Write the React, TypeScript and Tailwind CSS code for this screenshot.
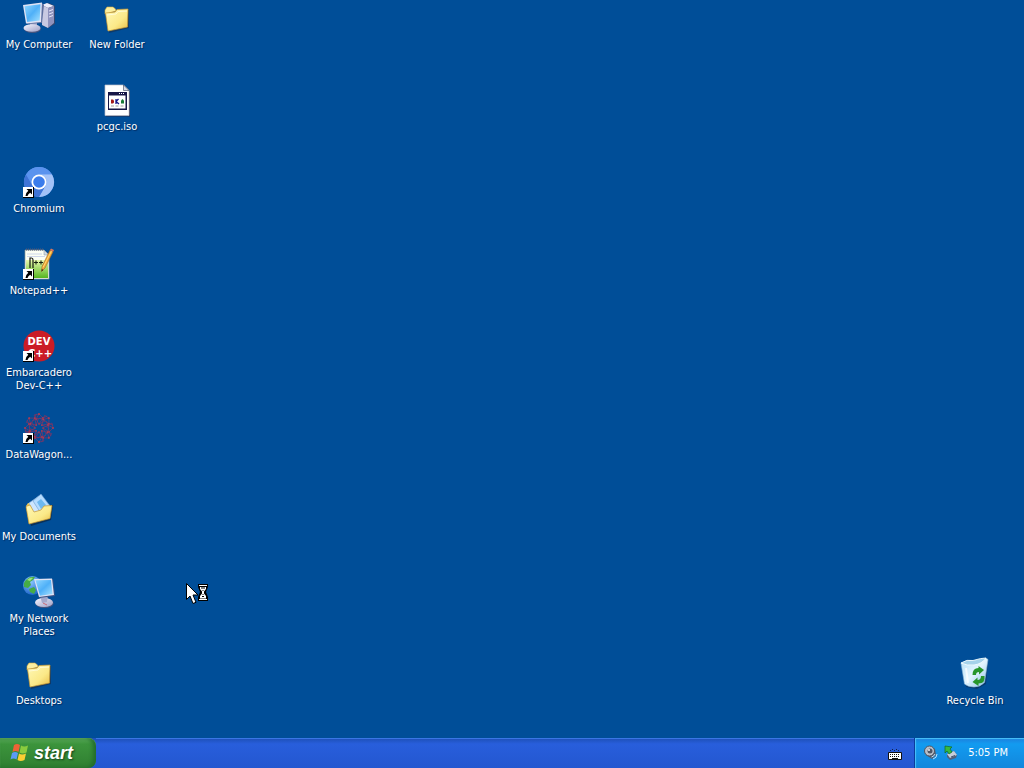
import { ReactNode, useState } from 'react'

type DesktopItem = { name: string; icon: ReactNode; place: string; shortcut?: boolean }

const Svg = ({ children }: { children: ReactNode }) => (
  <svg viewBox="0 0 32 32" className="size-8 overflow-visible" aria-hidden="true">
    {children}
  </svg>
)

const Gradients = () => (
  <svg className="absolute size-0" aria-hidden="true">
    <defs>
      <linearGradient id="screen" x1="0" y1="0" x2="1" y2="1">
        <stop offset="0" stopColor="#8fd6ff" />
        <stop offset="0.5" stopColor="#4fb0f8" />
        <stop offset="1" stopColor="#a6e2ff" />
      </linearGradient>
      <linearGradient id="folder" x1="0" y1="0" x2="1" y2="1">
        <stop offset="0" stopColor="#fff9b8" />
        <stop offset="0.6" stopColor="#fbe988" />
        <stop offset="1" stopColor="#e9bd45" />
      </linearGradient>
      <linearGradient id="plastic" x1="0" y1="0" x2="1" y2="1">
        <stop offset="0" stopColor="#f6f6ff" />
        <stop offset="1" stopColor="#9d9fc6" />
      </linearGradient>
      <linearGradient id="glass" x1="0" y1="0" x2="1" y2="1">
        <stop offset="0" stopColor="#b4def5" />
        <stop offset="0.5" stopColor="#e3f5ff" />
        <stop offset="1" stopColor="#86bde2" />
      </linearGradient>
      <linearGradient id="grass" x1="0" y1="0" x2="0" y2="1">
        <stop offset="0" stopColor="#e9f9ae" />
        <stop offset="1" stopColor="#55b51f" />
      </linearGradient>
      <radialGradient id="globe" cx="0.4" cy="0.3" r="0.7">
        <stop offset="0" stopColor="#8cc8ff" />
        <stop offset="1" stopColor="#1f66cc" />
      </radialGradient>
    </defs>
  </svg>
)

const ShortcutArrow = () => (
  <svg viewBox="0 0 11 11" className="absolute bottom-0 left-0 size-[11px]" aria-hidden="true">
    <path d="M0 0h11v11H0z" fill="#000" />
    <path d="M0 0h10v10H0z" fill="#fff" />
    <path d="M3.500 2H9v5.500L7.200 5.700Q5 7 4.500 9H2.500Q2.500 6 5.300 3.800z" fill="#000" />
  </svg>
)

const ComputerIcon = () => (
  <Svg>
    <path d="M20 3l6-2 6 3v18l-7 4-6-3z" fill="#34466e" />
    <path d="M19 3l5-2 7 3-6 2z" fill="#eeeefb" />
    <path d="M19 3l6 3v20l-6-3z" fill="#c8c9e2" />
    <path d="M25 6l6-2v17l-6 5z" fill="#8f92bd" />
    <path d="M26 9l4-1.500M26 12l4-1.500M26 15l4-1.500" stroke="#e6e6f8" />
    <path d="M7 20h7v5H7z" fill="#a4a9cc" />
    <ellipse cx="9.500" cy="27" rx="8.500" ry="4" fill="#49557e" />
    <ellipse cx="9" cy="26" rx="8.500" ry="3.800" fill="url(#plastic)" />
    <path d="M0.500 3.500L19 1l2 2-2 18L4 22z" fill="#5d6f9f" />
    <path d="M0 3L19 0.500 18 20 3 21.500z" fill="#dfe3f5" />
    <path d="M1.500 4.200L17.500 2.200 16.700 18.500 4.200 20z" fill="url(#screen)" />
  </Svg>
)

const FolderIcon = () => (
  <Svg>
    <path d="M5 9l23-1 0 18-20 5z" fill="#143054" opacity="0.7" />
    <path d="M4 8l2-3h6l2.500 2L15 9l-11 3z" fill="#fbefa0" stroke="#d9ab3b" strokeWidth="0.6" />
    <path d="M4.500 11L14 10l2-2.500 11-0.500-0.500 18L7 29z" fill="url(#folder)" stroke="#c79632" strokeWidth="0.700" />
    <path d="M6 13l9-1 2-2.500 9-0.500" fill="none" stroke="#fffbd5" />
  </Svg>
)

const IsoIcon = () => (
  <Svg>
    <path d="M5 2h18l6 6v24.500H5z" fill="#222f55" />
    <path d="M4 1h18.500L28 6.500V31.500H4z" fill="#fff" stroke="#bdbfc9" strokeWidth="0.700" />
    <path d="M22.500 1v5.500H28z" fill="#d6dbe8" stroke="#555b70" strokeWidth="0.700" />
    <path d="M7 8h19v18H7z" fill="#161646" />
    <path d="M8 11.500h16.500V24.500H8z" fill="#fff" />
    <path d="M18 9.500h1m1 0h1m1 0h1" stroke="#fff" />
    <path d="M10 15.500h2l1 1v2l-1 1h-2z" fill="#a31818" />
    <path d="M15 15v5M17.500 15L15 17.500 18 20" stroke="#151588" strokeWidth="1.300" fill="none" />
    <path d="M20 19.500v-3l1.500-1.500 1.500 1.500v3z" fill="#187a36" />
    <path d="M10 22h3m1.500 0h3m2 0h3" stroke="#888" strokeWidth="0.800" />
  </Svg>
)

const ChromiumIcon = () => (
  <Svg>
    <circle cx="16" cy="16" r="15" fill="#659cf3" />
    <path d="M3 8.500A15 15 0 0 1 29 8.500H16A7.500 7.500 0 0 0 9.500 19.700z" fill="#5a93ee" />
    <path d="M29 8.500A15 15 0 0 1 16 31L22.500 19.700A7.500 7.500 0 0 0 16 8.500z" fill="#a3c2f7" />
    <path d="M3 8.500A15 15 0 0 0 16 31L22.500 19.700A7.500 7.500 0 0 1 9.500 19.700z" fill="#3f74d6" />
    <circle cx="16" cy="16" r="7.500" fill="#fff" />
    <circle cx="16" cy="16" r="5.800" fill="#3b7ceb" />
  </Svg>
)

const NotepadIcon = () => (
  <Svg>
    <path d="M2 2h19l5 5v24H2z" fill="#fcfff4" stroke="#8d9a94" strokeWidth="0.700" />
    <path d="M3 12h22v18H3z" fill="url(#grass)" />
    <path d="M4 6h15M4 8.500h18" stroke="#c2cde8" strokeWidth="0.800" />
    <path d="M3 1.500h17" stroke="#50597a" strokeWidth="2" strokeDasharray="1 1" />
    <path d="M21 2v5h5z" fill="#d2dbe4" stroke="#8792a3" strokeWidth="0.500" />
    <path d="M7 20V10h1.500q1.500 0 1.500 2v8" fill="none" stroke="#141a10" strokeWidth="1.200" />
    <path d="M11 14.500h4M13 12.500v4M16 14.500h4M18 12.500v4" stroke="#172012" strokeWidth="1.100" />
    <path d="M27 2l3 2-8 16-3.500 3.500 0.500-5z" fill="#f2a73a" stroke="#8c5b1d" strokeWidth="0.500" />
    <path d="M28.500 3L20 19.500" stroke="#ffdc72" />
    <path d="M27 2l1-1.500 3 1.500-1 2z" fill="#d7755a" />
    <path d="M18.500 23.500l0.300-2.500 1.500 1z" fill="#2a1a0a" />
  </Svg>
)

const DevIcon = () => (
  <Svg>
    <circle cx="16" cy="16" r="15.500" fill="#cb1c26" />
    <g fill="#fff" fontFamily="'DejaVu Sans', sans-serif" fontWeight="700" fontSize="10" textAnchor="middle">
      <text x="16" y="15">DEV</text>
      <text x="17" y="27">C++</text>
    </g>
  </Svg>
)

const spokes = [0, 45, 90, 135, 180, 225, 270, 315]

const DataWagonIcon = () => (
  <Svg>
    <g fill="none" stroke="#7d3565" strokeWidth="0.700">
      {spokes.map(angle => (
        <g key={angle} transform={`rotate(${angle} 16 16)`}>
          <path d="M16 12L13 7l3-5 4 4-4 6 6-3-2-3 4-2M16 2l-5 1 2 4-4 2M20 6l-7 1" />
          <g fill="#b13a50" stroke="none">
            <circle cx="16" cy="2" r="1" />
            <circle cx="13" cy="7" r="0.900" />
            <circle cx="20" cy="6" r="0.900" />
            <circle cx="16" cy="12" r="0.800" />
          </g>
        </g>
      ))}
    </g>
  </Svg>
)

const DocumentsIcon = () => (
  <Svg>
    <path d="M5 13l25-2-2 15-20 6z" fill="#0c2340" opacity="0.700" />
    <path d="M3 12l2-3h5l3 2 13-1 1 4L6 29z" fill="#e8c558" />
    <path d="M6 9l10-7 9 13-13 7z" fill="#cde6ff" stroke="#90b6dd" strokeWidth="0.600" />
    <path d="M10 7l8-7 9 12-8 9z" fill="#b5dcff" stroke="#6e9fd2" strokeWidth="0.600" />
    <path d="M14 8l4-3 5 6-5 4z" fill="#6cb8f0" />
    <path d="M3 12.500l4-1.500 4 7 7-2 3-4 8-0.500-2 13L6 30z" fill="url(#folder)" stroke="#c79632" strokeWidth="0.700" />
  </Svg>
)

const NetworkIcon = () => (
  <Svg>
    <circle cx="9.500" cy="9.500" r="9.500" fill="url(#globe)" />
    <path d="M3 4q4-4 9-3l-2 3-3 2 1 3-3 3-4-1q-1-4 2-7zM6 13l5-2 2 3-2 4-4-2z" fill="#45ac46" />
    <path d="M4 4q3-3 6-2L7 5z" fill="#9ddf7c" />
    <ellipse cx="21.500" cy="27.500" rx="9" ry="4.500" fill="#49557e" />
    <ellipse cx="21" cy="26.500" rx="9" ry="4.500" fill="url(#plastic)" />
    <path d="M17 19h8l-1 7-5 1z" fill="#a4a9cc" />
    <path d="M12 3L30 3l2 17-16 2z" fill="#3d5384" />
    <path d="M11 3L29 2.500 31 19 16 21z" fill="#dfe3f5" />
    <path d="M12.500 4.300L28 4l1.500 14-12.500 1.700z" fill="url(#screen)" />
    <path d="M20 27l4 2" stroke="#cb6874" />
  </Svg>
)

const RecycleIcon = () => (
  <Svg>
    <path d="M6 8l23-5-2 23-9 5-11-2z" fill="#0b2c55" opacity="0.600" />
    <path d="M2 5q8 2 14 1 7-2 11-6l2 1.500-3.500 23Q21 29 15 29T5.500 26z" fill="url(#glass)" stroke="#8fb9d8" strokeWidth="0.600" />
    <path d="M2 5q6-4 12-2.500Q22 0 27 0q-4 6-12 7Q8 8 2 5z" fill="#a5d2ea" stroke="#f5fdff" strokeWidth="0.900" />
    <path d="M7 10l2 15" stroke="#fff" strokeWidth="2" opacity="0.700" />
    <g fill="#27962b">
      <path d="M13.500 17q0-7 6-7V8l5.500 4-5 4.500V14q-3 0-3 3z" />
      <path d="M25.500 18q1 7.500-6 7.500V28L13.500 24l5-4.500V22q3.500 0 3.500-4z" />
    </g>
  </Svg>
)

const items: DesktopItem[] = [
  { name: 'My Computer', icon: <ComputerIcon />, place: 'col-start-1 row-start-1' },
  { name: 'New Folder', icon: <FolderIcon />, place: 'col-start-2 row-start-1' },
  { name: 'pcgc.iso', icon: <IsoIcon />, place: 'col-start-2 row-start-2' },
  { name: 'Chromium', icon: <ChromiumIcon />, place: 'col-start-1 row-start-3', shortcut: true },
  { name: 'Notepad++', icon: <NotepadIcon />, place: 'col-start-1 row-start-4', shortcut: true },
  { name: 'Embarcadero Dev-C++', icon: <DevIcon />, place: 'col-start-1 row-start-5', shortcut: true },
  { name: 'DataWagon...', icon: <DataWagonIcon />, place: 'col-start-1 row-start-6', shortcut: true },
  { name: 'My Documents', icon: <DocumentsIcon />, place: 'col-start-1 row-start-7' },
  { name: 'My Network Places', icon: <NetworkIcon />, place: 'col-start-1 row-start-8' },
  { name: 'Desktops', icon: <FolderIcon />, place: 'col-start-1 row-start-9' },
  { name: 'Recycle Bin', icon: <RecycleIcon />, place: 'col-end-[-1] row-end-[-1]' }
]

const BusyCursor = () => (
  <svg viewBox="0 0 24 22" className="pointer-events-none absolute top-[583px] left-[186px] h-[22px] w-6" aria-hidden="true">
    <path d="M0.500 0.500v16l3.500-3.500 3 7.500 3-1.200-3-7.300h5z" fill="#fff" stroke="#000" />
    <path d="M12 1h10v3l-2 5 2 5v4H12v-4l2-5-2-5z" fill="#000" />
    <path d="M13 2.500h8M13 16.500h8" stroke="#fff" />
    <path d="M14 4h6v2l-2 2.500v2l2 2.500v2.500h-6V13l2-2.500v-2L14 6z" fill="#fff" />
    <path d="M15 5h4M17 7v1M17 11v1M16 13.500h2" stroke="#000" />
  </svg>
)

const WindowsFlag = () => (
  <svg viewBox="0 0 20 18" className="h-[18px] w-5" aria-hidden="true">
    <path d="M4 1q3-2 6 0L8.500 8q-3-2-6 0z" fill="#ee6336" />
    <path d="M11 1.500q3 2 7 0L16.500 8.500q-4 2-7 0z" fill="#8acb3e" />
    <path d="M2 9q3-2 6 0L6.500 15.500q-3-2-6 0z" fill="#5b9bf5" />
    <path d="M9 9.500q3 2 7 0l-1.500 6.500q-4 2-7 0z" fill="#fbce33" />
  </svg>
)

const KeyboardIcon = () => (
  <svg viewBox="0 0 14 14" className="size-[14px]" aria-hidden="true">
    <path d="M2 3.500h1m1-1h1m1 1h1m1-1h1m1 1h1" stroke="#10204a" />
    <path d="M0.500 5.500h13v7H0.500z" fill="#fff" stroke="#101010" />
    <path d="M2 7.500h10M2 9.500h10" stroke="#111" strokeDasharray="1 1" />
    <path d="M4 11.500h6" stroke="#111" />
  </svg>
)

const VolumeIcon = () => (
  <svg viewBox="0 0 16 16" className="size-4" aria-hidden="true">
    <path d="M2 4l5-3 5 3 1 6-4 4-6-4z" fill="#545e70" />
    <circle cx="6.500" cy="6" r="5" fill="#b9bfc8" stroke="#4d5563" />
    <circle cx="7" cy="6" r="2.500" fill="#4e5666" />
    <circle cx="6" cy="5" r="1" fill="#edf0f4" />
    <path d="M10 14q4-1 4-5M8.500 12q3-1 3.500-3" fill="none" stroke="#b9e2ff" />
  </svg>
)

const EjectIcon = () => (
  <svg viewBox="0 0 16 16" className="size-4" aria-hidden="true">
    <path d="M4 9l7-3 3 4-1 3-6 2-3-3z" fill="#50607b" />
    <path d="M4 9l7-3 3 4-7 3z" fill="#c7cedb" />
    <path d="M8 12l4-1.500" stroke="#43516b" />
    <path d="M2 1l7 1-2 2 2 3-3 2-2-3-2 2z" fill="#37b940" stroke="#126c22" strokeWidth="0.700" />
  </svg>
)

const App = () => {
  const [selected, setSelected] = useState<string>(null)

  return (
    <div className="flex h-screen flex-col overflow-hidden bg-[#004e98] font-[Tahoma,'DejaVu_Sans_Condensed','Noto_Sans',sans-serif] text-[11px] text-white select-none">
      <Gradients />

      <main className="grid min-h-0 grow grid-cols-[repeat(auto-fill,78px)] grid-rows-[repeat(auto-fill,82px)]">
        {items.map(item => (
          <button
            key={item.name}
            className={`${item.place} flex flex-col items-center gap-1 pt-0.5`}
            onClick={() => setSelected(item.name)}
          >
            <span className="relative">
              {item.icon}
              {item.shortcut && <ShortcutArrow />}
            </span>
            <span
              className={`text-center leading-[13px] [text-shadow:1px_1px_1px_#002a60] ${selected === item.name ? 'bg-[#316ac5]' : ''}`}
            >
              {item.name}
            </span>
          </button>
        ))}
      </main>

      <footer className="flex h-[30px] shrink-0 bg-linear-to-b from-[#1d4fb5] from-0% via-[#285edc] via-20% to-[#2357d0]">
        <button className="flex w-24 items-center gap-1 rounded-r-lg bg-linear-to-b from-[#5cae5c] from-0% via-[#3c943c] via-20% to-[#2f7f31] pl-[10px] shadow-[inset_-3px_0_4px_#226b2b,inset_0_1px_1px_#73bd73]">
          <WindowsFlag />
          <span className="font-['Liberation_Sans',sans-serif] text-lg leading-5 font-bold italic [text-shadow:1px_1px_2px_#16401a]">
            start
          </span>
        </button>

        <div className="flex grow items-center justify-end border-t border-[#3a76e4] pr-3">
          <button aria-label="On-screen keyboard">
            <KeyboardIcon />
          </button>
        </div>

        <div className="flex w-[110px] items-center border-l border-[#0b3c9c] bg-linear-to-b from-[#1c7fdc] from-0% via-[#129bf0] via-20% to-[#1287dc] pr-4 pl-2 shadow-[inset_1px_1px_1px_#4cc2fa]">
          <button aria-label="Volume">
            <VolumeIcon />
          </button>
          <button className="ml-1" aria-label="Safely remove hardware">
            <EjectIcon />
          </button>
          <time className="ml-auto whitespace-nowrap">5:05 PM</time>
        </div>
      </footer>

      <BusyCursor />
    </div>
  )
}

export default App
